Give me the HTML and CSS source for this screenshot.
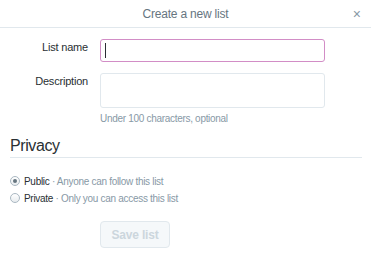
FILE: index.html
```html
<!DOCTYPE html>
<html lang="en">
<head>
  <meta charset="UTF-8">
  <title>Create a new list</title>
  <link rel="stylesheet" href="styles.css">
</head>
<body>
  <div class="modal">
    <div class="modal-header">
      <h1>Create a new list</h1>
      <span class="close">&times;</span>
    </div>

    <div class="modal-body">
      <div class="row">
        <label class="row-label" for="listName">List name</label>
        <div class="input-wrap">
          <input type="text" id="listName" class="field focused">
          <span class="caret"></span>
        </div>
      </div>
      <div class="row">
        <label class="row-label" for="listDesc">Description</label>
        <div class="field-wrap">
          <textarea id="listDesc" class="field area"></textarea>
          <p class="help">Under 100 characters, optional</p>
        </div>
      </div>

      <h2 class="section">Privacy</h2>
      <div class="choices">
        <label class="choice"><span class="radio checked"></span><b>Public</b><span class="muted">&nbsp;· Anyone can follow this list</span></label>
        <label class="choice"><span class="radio"></span><b>Private</b><span class="muted">&nbsp;· Only you can access this list</span></label>
      </div>

      <div class="actions">
        <button class="btn" disabled>Save list</button>
      </div>
    </div>
  </div>
</body>
</html>
```

FILE: styles.css
```css
body { margin: 0; font-family: "Liberation Sans", Arial, sans-serif; color: #292f33; background: #fff; }
.modal { width: 371px; height: 259px; }
.modal-header { height: 27px; border-bottom: 1px solid #e1e8ed; display: flex; align-items: center; justify-content: center; position: relative; }
.modal-header h1 { margin: 0; font-size: 12px; letter-spacing: -0.2px; font-weight: normal; color: #66757f; }
.close { position: absolute; right: 10px; top: 6px; font-size: 14px; color: #8899a6; }
.modal-body { padding: 11px 9px 0 10px; }
.row { display: flex; font-size: 11px; letter-spacing: -0.2px; margin-bottom: 11px; }
.row-label { width: 78px; text-align: right; margin-right: 12px; padding-top: 2px; }
.input-wrap { position: relative; }
.caret { position: absolute; left: 5px; top: 4px; width: 1px; height: 15px; background: #292f33; }
.field { width: 225px; box-sizing: border-box; border: 1px solid #e1e8ed; border-radius: 3px; margin: 0; font: inherit; }
.field.focused { display: block; height: 23px; border-color: #d28dc6; outline: none; }
.area { display: block; height: 35px; resize: none; }
.field-wrap { display: flex; flex-direction: column; }
.help { margin: 5px 0 0; font-size: 10px; letter-spacing: -0.3px; color: #8899a6; }
.section { margin: 13px 0 0; font-size: 16px; line-height: 18px; letter-spacing: -0.4px; font-weight: normal; padding-bottom: 2px; border-bottom: 1px solid #e1e8ed; }
.choices { margin-top: 16px; display: flex; flex-direction: column; gap: 3px; font-size: 10px; letter-spacing: -0.3px; }
.choice { display: flex; align-items: center; height: 14px; }
.choice b { font-weight: normal; }
.muted { color: #8899a6; }
.radio { width: 8px; height: 8px; border: 1px solid #aab8c2; border-radius: 50%; margin-right: 4px; background: linear-gradient(#fff, #e8ecef); position: relative; }
.radio.checked::after { content: ""; position: absolute; left: 2px; top: 2px; width: 4px; height: 4px; border-radius: 50%; background: #66757f; }
.actions { padding-left: 90px; margin-top: 16px; }
.btn { width: 70px; height: 27px; border: 1px solid #e1e8ed; border-radius: 4px; background: #f5f8fa; color: #ccd6dd; font: bold 12px "Liberation Sans", Arial, sans-serif; letter-spacing: -0.2px; }
```
